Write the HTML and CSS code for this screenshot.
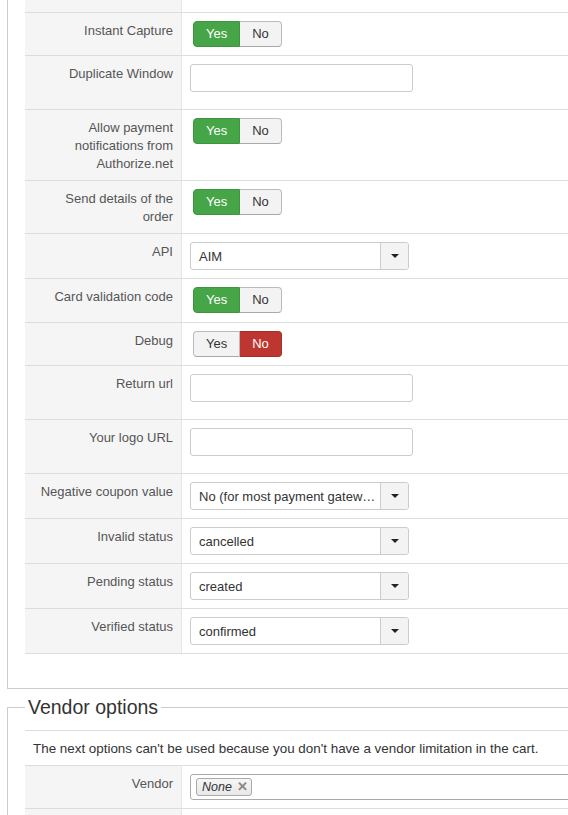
FILE: index.html
```html
<!DOCTYPE html>
<html lang="en">
<head>
  <meta charset="UTF-8">
  <meta name="viewport" content="width=device-width, initial-scale=1.0">
  <title>Authorize.net settings</title>
  <link rel="stylesheet" href="styles.css">
</head>
<body>
  <div class="page">

    <!-- Payment parameters -->
    <fieldset class="panel panel-open">
      <div class="form-rows">
        <div class="row row-cut">
          <div class="label"></div>
          <div class="control"></div>
        </div>
        <div class="row">
          <div class="label">Instant Capture</div>
          <div class="control">
            <div class="switch"><span class="yes">Yes</span><span>No</span></div>
          </div>
        </div>
        <div class="row">
          <div class="label">Duplicate Window</div>
          <div class="control"><input type="text" class="text-input"></div>
        </div>
        <div class="row">
          <div class="label">Allow payment notifications from Authorize.net</div>
          <div class="control">
            <div class="switch"><span class="yes">Yes</span><span>No</span></div>
          </div>
        </div>
        <div class="row">
          <div class="label">Send details of the order</div>
          <div class="control">
            <div class="switch"><span class="yes">Yes</span><span>No</span></div>
          </div>
        </div>
        <div class="row">
          <div class="label">API</div>
          <div class="control">
            <div class="select"><span class="select-value">AIM</span><span class="select-arrow"></span></div>
          </div>
        </div>
        <div class="row row-tall">
          <div class="label">Card validation code</div>
          <div class="control">
            <div class="switch"><span class="yes">Yes</span><span>No</span></div>
          </div>
        </div>
        <div class="row">
          <div class="label">Debug</div>
          <div class="control">
            <div class="switch"><span>Yes</span><span class="no">No</span></div>
          </div>
        </div>
        <div class="row">
          <div class="label">Return url</div>
          <div class="control"><input type="text" class="text-input"></div>
        </div>
        <div class="row">
          <div class="label">Your logo URL</div>
          <div class="control"><input type="text" class="text-input"></div>
        </div>
        <div class="row">
          <div class="label">Negative coupon value</div>
          <div class="control">
            <div class="select"><span class="select-value">No (for most payment gateways)</span><span class="select-arrow"></span></div>
          </div>
        </div>
        <div class="row">
          <div class="label">Invalid status</div>
          <div class="control">
            <div class="select"><span class="select-value">cancelled</span><span class="select-arrow"></span></div>
          </div>
        </div>
        <div class="row">
          <div class="label">Pending status</div>
          <div class="control">
            <div class="select"><span class="select-value">created</span><span class="select-arrow"></span></div>
          </div>
        </div>
        <div class="row">
          <div class="label">Verified status</div>
          <div class="control">
            <div class="select"><span class="select-value">confirmed</span><span class="select-arrow"></span></div>
          </div>
        </div>
      </div>
    </fieldset>

    <!-- Vendor options -->
    <fieldset class="panel">
      <legend>Vendor options</legend>
      <div class="form-rows">
        <div class="note">The next options can't be used because you don't have a vendor limitation in the cart.</div>
        <div class="row">
          <div class="label">Vendor</div>
          <div class="control">
            <div class="tags-input">
              <span class="tag"><em>None</em><span class="tag-close">&#x2715;</span></span>
            </div>
          </div>
        </div>
        <div class="row">
          <div class="label">&nbsp;</div>
          <div class="control"></div>
        </div>
      </div>
    </fieldset>

  </div>
</body>
</html>
```

FILE: styles.css
```css
html, body {
  margin: 0;
  padding: 0;
  overflow: hidden;
}
body {
  font-family: "Liberation Sans", Arial, sans-serif;
  font-size: 13px;
  line-height: 18px;
  color: #333;
  background-color: #fff;
}
.page {
  width: 680px;
  padding-left: 7px;
}
.panel {
  margin: 0;
  padding: 0 0 34px 17px;
  border: 1px solid #ccc;
  min-width: 0;
}
.panel-open {
  border-top: 0;
}
.panel + .panel {
  margin-top: 7px;
}
legend {
  padding: 0 3px;
  font-size: 19.5px;
  line-height: 22px;
  color: #333;
}
.form-rows {
  border-bottom: 1px solid #ddd;
}
legend + .form-rows {
  margin-top: 12px;
}
.row {
  display: flex;
  border-top: 1px solid #ddd;
}
.row-cut {
  border-top: 0;
  height: 12px;
}
.row-tall .control {
  padding-bottom: 9px;
}
.label {
  flex: 0 0 157px;
  box-sizing: border-box;
  padding: 9px 8px 7px;
  text-align: right;
  color: #555;
  background-color: #f5f5f5;
  border-right: 1px solid #e6e6e6;
}
.row-cut .label {
  padding: 0;
}
.control {
  flex: 1;
  padding: 8px;
}
.row-cut .control {
  padding: 0;
}
.note {
  border-top: 1px solid #ddd;
  padding: 9px 8px 7px;
  font-size: 13.4px;
}

/* yes / no radio switch */
.switch {
  display: inline-flex;
  margin-left: 3px;
  vertical-align: top;
}
.switch span {
  display: block;
  padding: 3px 12px;
  line-height: 18px;
  border: 1px solid #bbb;
  border-bottom-color: #a8a8a8;
  background-color: #f3f3f3;
  color: #333;
}
.switch span:first-child {
  border-radius: 4px 0 0 4px;
}
.switch span:last-child {
  border-left: 0;
  border-radius: 0 4px 4px 0;
}
.switch .yes {
  background-color: #46a546;
  border-color: #3f953f;
  color: #fff;
}
.switch .no {
  background-color: #bd362f;
  border-color: #a52f29;
  color: #fff;
}

.text-input {
  display: block;
  width: 223px;
  height: 28px;
  box-sizing: border-box;
  margin: 0 0 9px;
  border: 1px solid #ccc;
  border-radius: 3px;
  background-color: #fff;
}

/* chosen-style dropdown */
.select {
  display: flex;
  width: 219px;
  height: 28px;
  box-sizing: border-box;
  border: 1px solid #ccc;
  border-radius: 3px;
  background-color: #fff;
}
.select-value {
  flex: 1;
  min-width: 0;
  padding: 1px 3px 0 8px;
  line-height: 25px;
  white-space: nowrap;
  overflow: hidden;
  text-overflow: ellipsis;
}
.select-arrow {
  display: flex;
  flex: 0 0 27px;
  align-items: center;
  justify-content: center;
  border-left: 1px solid #ccc;
  background-color: #f3f3f3;
  border-radius: 0 3px 3px 0;
}
.select-arrow::after {
  content: "";
  border-left: 4px solid transparent;
  border-right: 4px solid transparent;
  border-top: 4px solid #222;
}

/* multi-select with tags */
.tags-input {
  display: flex;
  align-items: center;
  width: 440px;
  height: 26px;
  box-sizing: border-box;
  padding: 0 5px;
  border: 1px solid #aaa;
  border-radius: 3px;
}
.tag {
  display: flex;
  align-items: center;
  height: 18px;
  box-sizing: border-box;
  padding: 0 3px 0 5px;
  border: 1px solid #aaa;
  border-radius: 3px;
  background: linear-gradient(#f6f6f6, #e8e8e8);
  font-size: 12.5px;
  line-height: 16px;
}
.tag em {
  color: #333;
}
.tag-close {
  margin-left: 5px;
  font-size: 13px;
  font-weight: bold;
  color: #888;
}
```
